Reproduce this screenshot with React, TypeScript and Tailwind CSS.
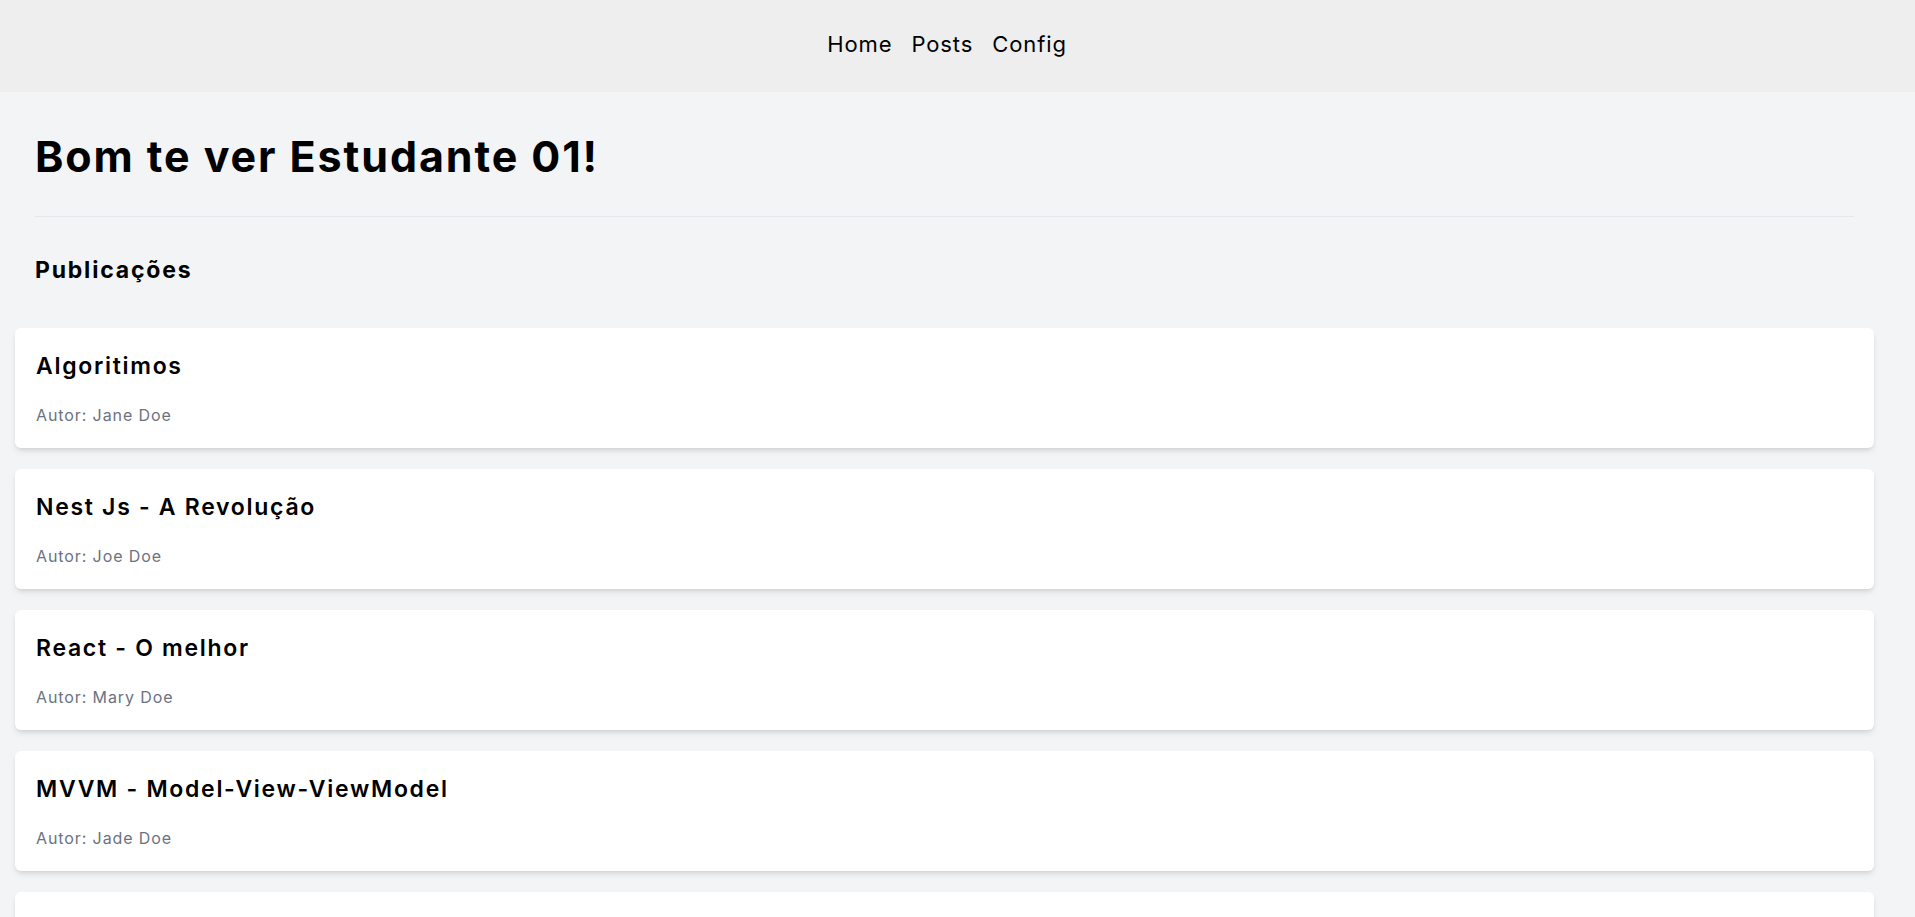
import React from "react";

const posts = [
  { title: "Algoritimos", author: "Jane Doe" },
  { title: "Nest Js - A Revolução", author: "Joe Doe" },
  { title: "React - O melhor", author: "Mary Doe" },
  { title: "MVVM - Model-View-ViewModel", author: "Jade Doe" },
  { title: "Banco de Dados", author: "John Doe" },
  { title: "TypeScript", author: "Jim Doe" },
];

export default function App() {
  return (
    <div
      className="min-h-screen bg-[#f3f4f6] text-black"
      style={{ fontFamily: "Inter, 'Noto Sans', sans-serif" }}
    >
      <header className="h-[92px] bg-[#eeeeee] flex items-center justify-center pb-1 pr-[21px]">
        <nav className="flex items-center gap-[19px] text-[22px] leading-[28px] font-normal tracking-[0.9px]">
          <a className="cursor-pointer">Home</a>
          <a className="cursor-pointer">Posts</a>
          <a className="cursor-pointer">Config</a>
        </nav>
      </header>
      <main className="ml-[15px] w-[1859px] pb-10">
        <section className="px-[20px] pt-[40px]">
          <h1 className="text-[43px] leading-[48px] font-bold tracking-[1.9px]">
            Bom te ver Estudante 01!
          </h1>
          <hr className="mt-[36px] border-0 h-px bg-[#e5e7eb]" />
          <h2 className="mt-[39px] text-[23px] leading-[28px] font-bold tracking-[1.8px]">
            Publicações
          </h2>
        </section>
        <ul className="mt-[44px] flex flex-col gap-[21px]">
          {posts.map((p) => (
            <li
              key={p.title}
              className="h-[120px] bg-white rounded-md shadow-md px-[21px] pt-[22px]"
            >
              <h3 className="text-[23px] leading-[32px] font-semibold tracking-[1.7px]">
                {p.title}
              </h3>
              <p className="mt-[21px] text-[16px] leading-[24px] text-[#6b7280] tracking-[0.9px]">
                Autor: {p.author}
              </p>
            </li>
          ))}
        </ul>
      </main>
    </div>
  );
}
